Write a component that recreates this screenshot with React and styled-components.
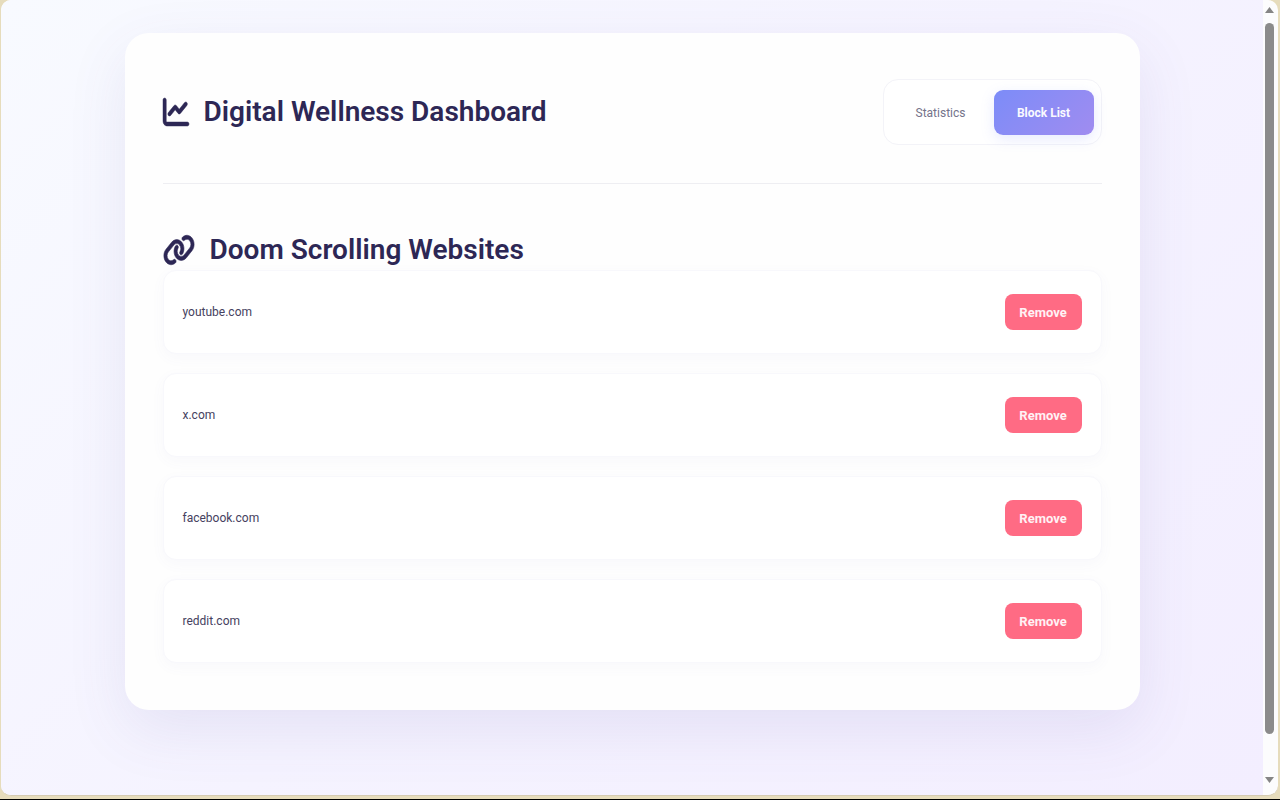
import React, { useState } from "react";
import styled, { createGlobalStyle, css } from "styled-components";
import { FaChartLine, FaLink } from "react-icons/fa6";

const GlobalStyle = createGlobalStyle`
  * { box-sizing: border-box; }
  body {
    margin: 0;
    background: #e6dcbc;
    color: #2d2755;
    font-family: Roboto, "Liberation Sans", sans-serif;
  }
  button { font-family: inherit; cursor: pointer; }
`;

const Desktop = styled.div`
  display: flex;
  height: 100vh;
  padding: 0 2px 3px 1px;
  border-bottom: 1px solid #000;
`;

const Window = styled.div`
  display: flex;
  flex: 1;
  min-width: 0;
  overflow: hidden;
  border: solid #d5cbb2;
  border-width: 0 0 1px;
  border-radius: 10px;
  background: #fcfcfd;
`;

const Page = styled.main`
  flex: 1;
  min-width: 0;
  overflow: hidden;
  padding: 33px 20px;
  background: linear-gradient(135deg, #f8faff 0%, #f5f3ff 50%, #f3eeff 100%);
`;

const ScrollTrack = styled.div`
  display: flex;
  flex-direction: column;
  align-items: center;
  width: 15px;
  padding: 7px 2px 12px 0;
`;

const Arrow = styled.svg`
  width: 9px;
  height: 6px;
  fill: #858585;
`;

const Thumb = styled.div`
  flex: 1;
  width: 9px;
  margin: 10px 0 43px;
  border-radius: 5px;
  background: #8b8b8b;
`;

const Card = styled.section`
  max-width: 1015px;
  margin: 0 auto;
  padding: 46px 38px 47px;
  border-radius: 24px;
  background: #fefefe;
  box-shadow: 0 20px 60px rgba(90, 80, 160, 0.1);
`;

const Header = styled.header`
  display: flex;
  align-items: center;
  justify-content: space-between;
  padding-bottom: 38px;
  border-bottom: 1px solid #eeeef2;
`;

const headingStyle = css`
  display: flex;
  align-items: center;
  gap: 15px;
  margin: 0;
  font-size: 28px;
  font-weight: 600;
  line-height: 40px;
`;

const Title = styled.h1`
  ${headingStyle}
`;

const SectionTitle = styled.h2`
  ${headingStyle}
  margin-top: 46px;
`;

const ChartIcon = styled(FaChartLine)`
  width: 26px;
  height: 32px;
  overflow: visible;
  stroke: currentColor;
  stroke-width: 8;
`;

const LinkIcon = styled(FaLink)`
  width: 32px;
  height: 32px;
  overflow: visible;
  stroke: currentColor;
  stroke-width: 10;
`;

const Tabs = styled.nav`
  display: flex;
  gap: 3px;
  padding: 10px 7px 9px;
  border: 1px solid #f3f3f8;
  border-radius: 15px;
  background: #fff;
`;

const Tab = styled.button`
  min-width: 100px;
  height: 45px;
  padding: 0 22px;
  border: 0;
  border-radius: 9px;
  font-size: 12px;
  font-weight: ${(p) => (p.$active ? 700 : 400)};
  color: ${(p) => (p.$active ? "#fafaff" : "#74738a")};
  background: ${(p) => (p.$active ? "linear-gradient(135deg, #7c8cf8, #a08cf0)" : "transparent")};
  box-shadow: ${(p) => (p.$active ? "0 4px 14px rgba(124, 140, 248, 0.18)" : "none")};
`;

const SiteList = styled.ul`
  display: flex;
  flex-direction: column;
  gap: 19px;
  margin: 0;
  padding: 0;
  list-style: none;
`;

const SiteRow = styled.li`
  display: flex;
  align-items: center;
  justify-content: space-between;
  height: 84px;
  padding: 0 19px;
  border: 1px solid #f8f8fc;
  border-radius: 13px;
  background: #fff;
  box-shadow: 0 4px 14px rgba(110, 110, 180, 0.04);
  font-size: 12px;
  color: #454160;
`;

const RemoveButton = styled.button`
  min-width: 77px;
  height: 36px;
  padding: 0 14px;
  border: 0;
  border-radius: 8px;
  background: #ff6b84;
  color: #fff2f5;
  font-size: 13px;
  font-weight: 700;
`;

const tabs = ["Statistics", "Block List"];
const initialSites = ["youtube.com", "x.com", "facebook.com", "reddit.com"];

export default function App() {
  const [active, setActive] = useState("Block List");
  const [sites, setSites] = useState(initialSites);

  return (
    <>
      <GlobalStyle />
      <Desktop>
        <Window>
          <Page>
            <Card>
              <Header>
                <Title>
                  <ChartIcon preserveAspectRatio="none" aria-hidden="true" />
                  Digital Wellness Dashboard
                </Title>
                <Tabs>
                  {tabs.map((name) => (
                    <Tab key={name} $active={name === active} onClick={() => setActive(name)}>
                      {name}
                    </Tab>
                  ))}
                </Tabs>
              </Header>
              <SectionTitle>
                <LinkIcon preserveAspectRatio="none" aria-hidden="true" />
                Doom Scrolling Websites
              </SectionTitle>
              <SiteList>
                {sites.map((site) => (
                  <SiteRow key={site}>
                    {site}
                    <RemoveButton onClick={() => setSites(sites.filter((s) => s !== site))}>
                      Remove
                    </RemoveButton>
                  </SiteRow>
                ))}
              </SiteList>
            </Card>
          </Page>
          <ScrollTrack aria-hidden="true">
            <Arrow viewBox="0 0 9 6"><path d="M4.5 0 9 6H0z" /></Arrow>
            <Thumb />
            <Arrow viewBox="0 0 9 6"><path d="M0 0h9L4.5 6z" /></Arrow>
          </ScrollTrack>
        </Window>
      </Desktop>
    </>
  );
}
